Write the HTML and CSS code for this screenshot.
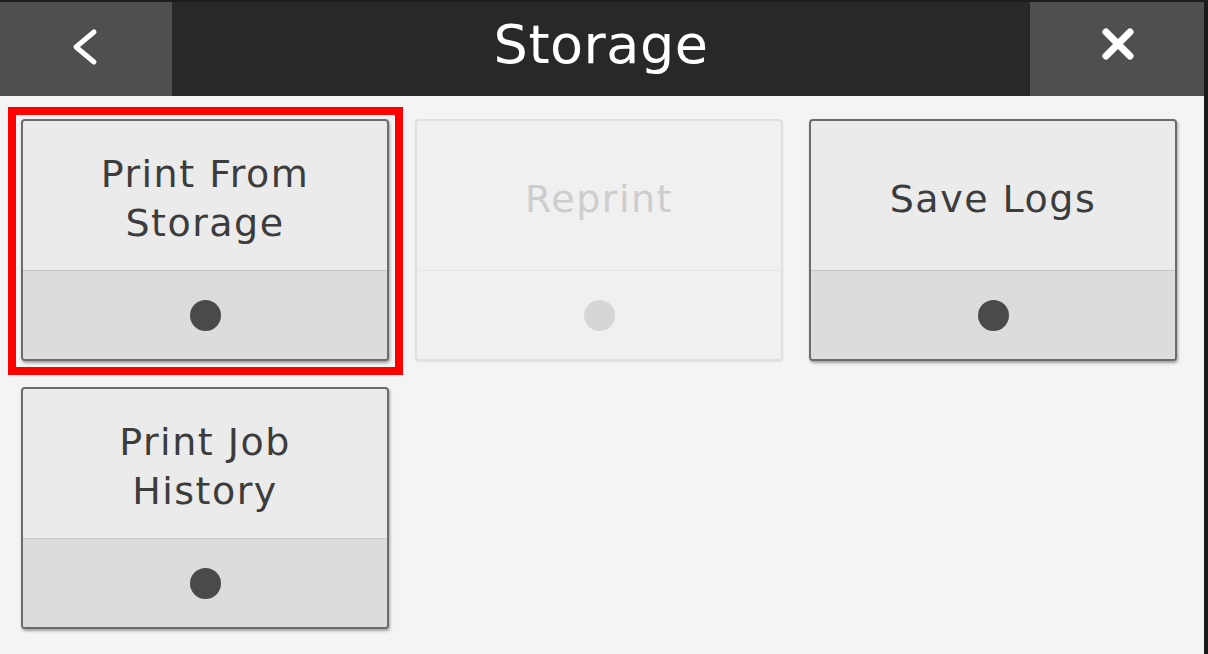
FILE: index.html
```html
<!DOCTYPE html>
<html lang="en">
<head>
<meta charset="utf-8">
<title>Storage</title>
<link rel="stylesheet" href="styles.css">
</head>
<body>
<div class="screen">
  <header class="header">
    <button class="hbtn back" aria-label="Back">
      <svg width="40" height="40" viewBox="0 0 40 40"><path d="M30 5 L12 20 L30 35" fill="none" stroke="#fff" stroke-width="5" stroke-linecap="round" stroke-linejoin="round"/></svg>
    </button>
    <h1 class="title">Storage</h1>
    <button class="hbtn close" aria-label="Close">
      <svg width="40" height="40" viewBox="0 0 40 40"><path d="M8 8 L32 32 M32 8 L8 32" fill="none" stroke="#fff" stroke-width="7" stroke-linecap="round"/></svg>
    </button>
  </header>
  <main class="grid">
    <button class="card selected">
      <span class="label">Print From<br>Storage</span>
      <span class="foot"><span class="dot"></span></span>
    </button>
    <button class="card disabled">
      <span class="label">Reprint</span>
      <span class="foot"><span class="dot"></span></span>
    </button>
    <button class="card">
      <span class="label">Save Logs</span>
      <span class="foot"><span class="dot"></span></span>
    </button>
    <button class="card">
      <span class="label">Print Job<br>History</span>
      <span class="foot"><span class="dot"></span></span>
    </button>
  </main>
</div>
</body>
</html>
```

FILE: styles.css
```css
* { box-sizing: border-box; }
html, body {
  margin: 0;
  padding: 0;
  width: 1208px;
  height: 654px;
  overflow: hidden;
  background: #f4f4f4;
}
.screen {
  width: 1208px;
  height: 654px;
  border-top: 2px solid #1c1c1c;
  border-right: 4px solid #1a1a1a;
  background: #f4f4f4;
  font-family: "DejaVu Sans", sans-serif;
  display: flex;
  flex-direction: column;
}
.header {
  height: 94px;
  flex: none;
  display: flex;
  background: #282828;
}
.hbtn {
  width: 172px;
  border: none;
  padding: 0;
  margin: 0;
  display: flex;
  align-items: center;
  justify-content: center;
  background: #4f4f4f;
}
.back svg { margin-left: -4px; margin-top: -4px; }
.close { width: 174px; }
.close svg { margin-left: 2px; margin-top: -10px; }
.title {
  flex: 1;
  margin: 0;
  text-align: center;
  color: #fff;
  font-weight: normal;
  font-size: 54px;
  line-height: 86px;
  letter-spacing: 0.5px;
}
.grid {
  display: grid;
  grid-template-columns: repeat(3, 368px);
  grid-auto-rows: 242px;
  column-gap: 26px;
  row-gap: 26px;
  padding: 23px 0 0 21px;
}
.card {
  position: relative;
  display: flex;
  flex-direction: column;
  padding: 0;
  margin: 0;
  border: 2px solid #6c6c6c;
  border-radius: 4px;
  background: #ebebeb;
  box-shadow: 1px 2px 3px rgba(0, 0, 0, 0.35);
  font-family: inherit;
  color: #3c3c3c;
  overflow: visible;
}
.card.selected::after {
  content: "";
  position: absolute;
  left: -15px;
  top: -14px;
  right: -16px;
  bottom: -16px;
  border: 8px solid #ff0000;
  pointer-events: none;
}
.label {
  height: 150px;
  flex: none;
  display: flex;
  align-items: center;
  justify-content: center;
  text-align: center;
  padding-top: 7px;
  font-size: 38px;
  line-height: 49px;
  letter-spacing: 1.5px;
  border-bottom: 1px solid #c6c6c6;
  border-radius: 2px 2px 0 0;
}
.foot {
  flex: 1;
  display: flex;
  align-items: center;
  justify-content: center;
  background: #dcdcdc;
  border-radius: 0 0 2px 2px;
}
.dot {
  width: 31px;
  height: 31px;
  border-radius: 50%;
  background: #4a4a4a;
}
.card.disabled {
  border-color: #e0e0e0;
  background: #f0f0f0;
  color: #cdcdcd;
  box-shadow: 0 1px 2px rgba(0, 0, 0, 0.08);
}
.card.disabled .label { border-bottom-color: #e6e6e6; }
.card.disabled .foot { background: #f0f0f0; }
.card.disabled .dot { background: #d6d6d6; }
```
